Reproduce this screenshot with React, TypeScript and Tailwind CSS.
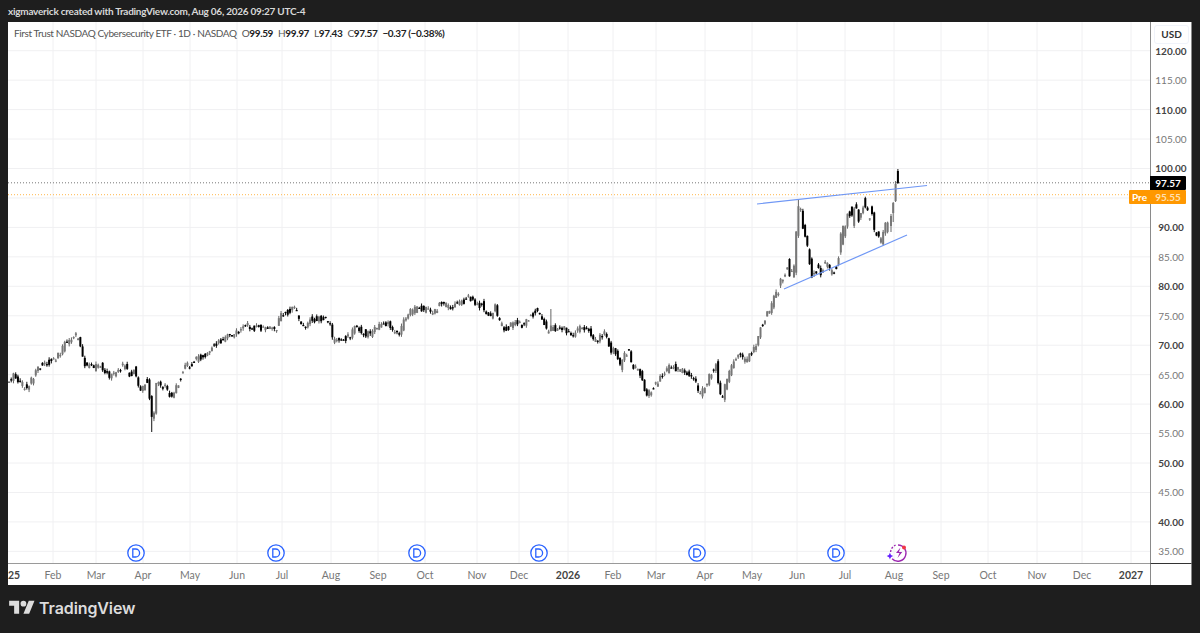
const SANS = "font-['Lato','Liberation_Sans',sans-serif]";

const KEY: [number, number][] = [
[8,381],[13,376],[20,384],[27,388],[35,375],[40,366],[50,362],[55,358],[65,345],[70,340],[77,336],[80,342],[83,360],[88,367],[95,368],[100,363],[105,372],[110,377],[118,368],[125,366],[130,375],[135,367],[137,385],[142,390],[147,378],[149,392],[152,420],[155,412],[156,385],[160,384],[165,388],[172,400],[176,388],[180,378],[185,366],[190,365],[197,358],[205,355],[212,345],[220,340],[228,336],[235,335],[240,328],
[250,326],[265,330],[268,328],[275,332],[280,316],[285,312],[295,310],[297,313],[300,323],[305,328],[310,320],[320,318],[330,322],[332,340],[340,338],[345,340],[350,335],[355,328],[362,332],[370,335],[378,325],[385,322],[392,326],[393,332],[400,332],[405,320],[412,310],[420,308],[430,312],[436,311],[440,303],[447,307],[450,310],[458,303],[465,300],[470,297],[478,306],[482,303],[484,310],[490,318],[495,305],
[500,325],[505,330],[510,326],[515,322],[523,327],[530,316],[535,311],[540,318],[545,325],[547,332],[551,328],[555,328],[562,328],[567,332],[575,335],[580,325],[590,330],[594,345],[598,338],[605,332],[610,350],[615,350],[620,368],[625,355],[628,350],[632,365],[640,372],[644,390],[648,395],[655,385],[663,372],[672,367],[680,370],[690,375],[695,380],[700,397],[706,385],[712,370],[717,362],[719,395],[722,400],[725,385],[730,370],[737,355],[745,360],[751,355],[757,345],[760,325],[765,320],[770,308],
[775,297],[780,285],[785,270],[788,262],[790,278],[795,265],[796,235],[798,205],[801,208],[803,225],[805,235],[808,255],[812,275],[815,268],[820,272],[825,265],[830,270],[835,268],[838,265],[839,245],[842,235],[845,222],[849,210],[852,222],[855,205],[858,218],[862,205],[864,197],[867,215],[870,212],[874,225],[878,235],[882,240],[885,230],[888,225],[890,230],[893,215],[895,190],[897,184],
];

const SPIKES: Record<number, [number, number]> = { 152: [0, 432], 156: [388, 0], 551: [309, 0], 717: [355, 0], 798: [200, 0], 864: [193, 0], 814: [0, 277], 811: [0, 278], 884: [0, 246] };

function yAt(x: number) {
  for (let i = 1; i < KEY.length; i++) {
    if (x <= KEY[i][0]) {
      const [a, b] = KEY[i - 1];
      const [c, d] = KEY[i];
      return b + ((d - b) * (x - a)) / (c - a);
    }
  }
  return KEY[KEY.length - 1][1];
}

let seed = 17;
const rnd = () => {
  seed = (seed * 1103515245 + 12345) & 0x7fffffff;
  return seed / 0x7fffffff;
};

type Candle = { x: number; o: number; c: number; h: number; l: number };
const candles: Candle[] = [];
for (let x = 9; x < 889; x += 2.23) {
  const amp = x > 840 ? 14 : x > 770 ? 10 : 7.5;
  const c = yAt(x) + (rnd() - 0.5) * amp;
  const o = yAt(x - 2.23) + (rnd() - 0.5) * amp;
  let h = Math.min(o, c) - rnd() * 2.5;
  let l = Math.max(o, c) + rnd() * 2.5;
  const s = SPIKES[Math.round(x)];
  if (s) {
    if (s[0]) h = s[0];
    if (s[1]) l = s[1];
  }
  candles.push({ x, o, c, h, l });
}
candles.push({ x: 891, o: 226, c: 216, h: 214, l: 232 });
candles.push({ x: 893.2, o: 213, c: 203, h: 202, l: 222 });
candles.push({ x: 895.6, o: 201, c: 184, h: 181, l: 202 });
candles.push({ x: 897.9, o: 171, c: 183, h: 169, l: 184 });

const PRICES = [120, 115, 110, 105, 100, 95, 90, 85, 80, 75, 70, 65, 60, 55, 50, 45, 40, 35];
const priceY = (p: number) => 168.5 + (100 - p) * 5.89;

const TICKS: { x: number; t: string; b?: boolean }[] = [
  { x: 14, t: "25", b: true }, { x: 53, t: "Feb" }, { x: 96, t: "Mar" }, { x: 143, t: "Apr" }, { x: 190, t: "May" }, { x: 237, t: "Jun" }, { x: 282, t: "Jul" }, { x: 331, t: "Aug" }, { x: 378, t: "Sep" }, { x: 425, t: "Oct" }, { x: 477, t: "Nov" }, { x: 519, t: "Dec" }, { x: 568, t: "2026", b: true }, { x: 613, t: "Feb" }, { x: 656, t: "Mar" }, { x: 705, t: "Apr" }, { x: 752, t: "May" }, { x: 797, t: "Jun" }, { x: 845, t: "Jul" }, { x: 894, t: "Aug" }, { x: 941, t: "Sep" }, { x: 988, t: "Oct" }, { x: 1037, t: "Nov" }, { x: 1082, t: "Dec" }, { x: 1131, t: "2027", b: true },
];
const DIVS = [136, 276, 417, 539, 697, 836];

function Chart() {
  return (
    <svg className="block w-full h-full" viewBox="8 22 1142 541">
      {PRICES.map((p) => (
        <line key={p} x1={8} x2={1150} y1={priceY(p)} y2={priceY(p)} stroke="#f0f0f2" strokeWidth={1} />
      ))}
      {TICKS.slice(1).map((t) => (
        <line key={t.x} x1={t.x} x2={t.x} y1={22} y2={563} stroke="#f0f0f2" strokeWidth={1} />
      ))}
      <line x1={8} x2={1150} y1={182.8} y2={182.8} stroke="#777" strokeWidth={1} strokeDasharray="1 2" />
      <line x1={8} x2={1150} y1={194.7} y2={194.7} stroke="#ffb74d" strokeWidth={1} strokeDasharray="1 2" />
      {candles.map((k, i) => {
        const up = k.c < k.o;
        const top = Math.min(k.o, k.c);
        const ht = Math.max(Math.abs(k.o - k.c), 1.2);
        return (
          <g key={i}>
            <line x1={k.x} x2={k.x} y1={k.h} y2={k.l} stroke={up ? "#666" : "#111"} strokeWidth={1} />
            <rect x={k.x - 1} y={top} width={2} height={ht} fill={up ? "#777" : "#000"} />
          </g>
        );
      })}
      <line x1={757} y1={204} x2={927} y2={185.5} stroke="#6f97f5" strokeWidth={1.2} />
      <line x1={784} y1={289} x2={907} y2={235} stroke="#6f97f5" strokeWidth={1.2} />
      {DIVS.map((x) => (
        <g key={x}>
          <circle cx={x} cy={553} r={8.2} fill="#fff" stroke="#2962ff" strokeWidth={1.3} />
          <path d={`M${x - 3.2} 549h2.8a4 4 0 0 1 0 8H${x - 3.2}z`} fill="none" stroke="#2962ff" strokeWidth={1.3} />
        </g>
      ))}
      <g fill="none">
        <path d="M898 545a8 8 0 0 1 7.6 10.5a8 8 0 0 1-13.5 3.2" stroke="#9c27b0" strokeWidth={1.3} />
        <path d="M890.6 552a8 8 0 0 1 5-6.8" stroke="#9c27b0" strokeWidth={1.3} strokeDasharray="2 1.5" />
        <path d="M900.5 547.5l-4.5 5.5h3.5l-2 5 4.8-6h-3.4z" fill="#9c27b0" />
        <path d="M890 552.5q.4 3 3.3 3.5q-2.9.5-3.3 3.5q-.4-3-3.3-3.5q2.9-.5 3.3-3.5z" fill="#651fff" />
        <circle cx={904} cy={547.5} r={2} fill="#f23645" />
      </g>
    </svg>
  );
}

export default function App() {
  return (
    <div className={`w-full h-[633px] bg-[#1e1e1e] flex flex-col overflow-hidden ${SANS}`}>
      <div className="h-[22px] pl-2 flex items-center text-[10px] tracking-[-0.25px] font-bold leading-none text-[#d8d8d8] whitespace-nowrap">
        xigmaverick created with TradingView.com, Aug 06, 2026 09:27 UTC-4
      </div>
      <div className="mx-2 h-[563px] bg-white flex flex-col">
        <div className="h-[541px] flex">
          <div className="relative w-[1142px] h-[541px]">
            <Chart />
            <div className="absolute left-[6px] top-[4px] flex items-center gap-[5px] text-[10px] tracking-[-0.38px] leading-[14px] text-[#555] whitespace-nowrap">
              <span>First Trust NASDAQ Cybersecurity ETF · 1D · NASDAQ</span>
              <span>O<b className="font-bold text-[#222]">99.59</b></span>
              <span>H<b className="font-bold text-[#222]">99.97</b></span>
              <span>L<b className="font-bold text-[#222]">97.43</b></span>
              <span>C<b className="font-bold text-[#222]">97.57</b></span>
              <span className="font-bold text-[#222]">−0.37 (−0.38%)</span>
            </div>
          </div>
          <div className="relative w-[42px] border-l border-r border-[#8a8a8a] pt-[14px] text-[10px]">
            {PRICES.map((p) => (
              <div key={p} className={`h-[29.45px] flex items-center justify-center leading-none ${p % 10 === 0 ? "font-bold text-[#444]" : "text-[#777]"}`}>
                {p === 95 ? "" : `${p}.00`}
              </div>
            ))}
            <div className="absolute left-[3px] top-[3px] w-[35px] h-[19px] bg-white border border-[#f0f3fa] rounded-[3px] flex items-center justify-center text-[10px] font-bold text-[#333]">USD</div>
            <div className="absolute left-[-1px] top-[154px] w-[36px] h-[14px] bg-black rounded-r-[1px] text-white text-[10px] font-bold flex items-center justify-center leading-none">97.57</div>
            <div className="absolute left-[-22px] top-[168px] h-[14px] flex text-white text-[10px] font-bold leading-none">
              <span className="w-[21px] bg-[#ff9800] rounded-l-[1px] flex items-center justify-center">Pre</span>
              <span className="w-[36px] bg-[#ff9800] rounded-r-[1px] flex items-center justify-center text-[#ffe0b2]">95.55</span>
            </div>
          </div>
        </div>
        <div className="h-[22px] flex border-t border-[#9a9a9a] text-[10.5px]">
          <div className="relative w-[1142px] leading-[22px]">
            {TICKS.map((t) => (
              <span
                key={t.x}
                className={`absolute top-0 -translate-x-1/2 ${t.b ? "font-bold text-[#444]" : "text-[#777]"}`}
                style={{ left: t.x - 8 }}
              >
                {t.t}
              </span>
            ))}
          </div>
          <div className="flex-1 border-l border-r border-[#8a8a8a] border-t border-t-[#333] -mt-px" />
        </div>
      </div>
      <div className="flex-1 pl-[9px] pb-[2px] flex items-center gap-[4px] text-[#dcdcdc]">
        <svg className="w-[26px] h-[20px]" viewBox="0 0 36 28" fill="currentColor">
          <path d="M14 22H7V11H0V4h14v18zM28 22h-8l7.5-18h8L28 22z" />
          <circle cx="20" cy="8" r="4" />
        </svg>
        <span className="text-[16px] font-['Inter',sans-serif] font-semibold leading-none tracking-[-0.1px]">TradingView</span>
      </div>
    </div>
  );
}
